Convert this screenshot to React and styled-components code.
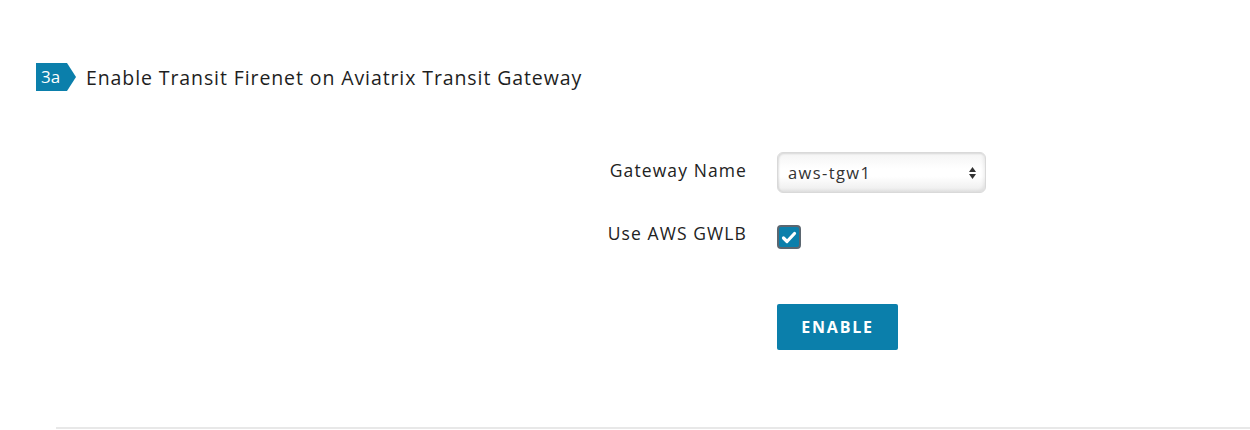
import React from 'react';
import styled, { createGlobalStyle } from 'styled-components';

const GlobalStyle = createGlobalStyle`
  body {
    margin: 0;
    background: #ffffff;
    font-family: "Open Sans", "Liberation Sans", sans-serif;
    color: #222;
  }
`;

const Page = styled.div`
  width: 1250px;
  height: 430px;
  overflow: hidden;
  padding-top: 63px;
  box-sizing: border-box;
`;

const StepHeader = styled.div`
  display: flex;
  align-items: center;
  gap: 11px;
  padding-left: 36px;
`;

const StepBadge = styled.div`
  position: relative;
  width: 31px;
  height: 28px;
  background: #0b7fab;
  color: #fff;
  font-size: 17px;
  line-height: 28px;
  padding-left: 5px;
  box-sizing: border-box;
  &::after {
    content: '';
    position: absolute;
    left: 31px;
    top: 0;
    border-top: 14px solid transparent;
    border-bottom: 14px solid transparent;
    border-left: 9px solid #0b7fab;
  }
`;

const StepTitle = styled.div`
  font-size: 19.5px;
  letter-spacing: 0.9px;
  color: #1e1e1e;
  margin-left: 8px;
`;

const Form = styled.div`
  display: grid;
  grid-template-columns: 746px 210px;
  column-gap: 31px;
  margin-top: 61px;
`;

const Label = styled.div`
  text-align: right;
  font-size: 17.5px;
  letter-spacing: 1.1px;
  margin-right: -1px;
  color: #222;
  margin-top: ${(p) => p.$top || 0}px;
  margin-bottom: ${(p) => p.$bottom || 0}px;
`;

const Field = styled.div`
  margin-bottom: ${(p) => p.$bottom || 0}px;
`;

const SelectBox = styled.div`
  position: relative;
  width: 209px;
  height: 41px;
  box-sizing: border-box;
  border: 1px solid #d9d9d9;
  border-radius: 6px;
  background: linear-gradient(#f4f4f4, #ffffff 40%, #ffffff 60%, #ececec);
  box-shadow: inset 1px 1px 2px rgba(0,0,0,0.12), inset -2px -2px 3px rgba(0,0,0,0.06);
  display: flex;
  align-items: center;
  padding-left: 10px;
  font-size: 16.5px;
  letter-spacing: 1.4px;
  color: #333;
`;

const Arrows = styled.svg`
  position: absolute;
  right: 8px;
  top: 13px;
`;

const CheckBox = styled.div`
  width: 24px;
  height: 24px;
  box-sizing: border-box;
  border: 2px solid #5b6670;
  border-radius: 4px;
  background: #0b7fab;
  display: flex;
  align-items: center;
  justify-content: center;
`;

const EnableButton = styled.button`
  width: 121px;
  height: 46px;
  background: #0b7fab;
  color: #fff;
  border: none;
  border-radius: 2px;
  font-family: "Open Sans", "Liberation Sans", sans-serif;
  font-weight: 700;
  font-size: 16px;
  letter-spacing: 1.8px;
  padding: 0;
`;

const Divider = styled.div`
  margin-left: 56px;
  margin-top: 77px;
  height: 2px;
  background: #e8e8e8;
`;

export default function App() {
  return (
    <Page>
      <GlobalStyle />
      <StepHeader>
        <StepBadge>3a</StepBadge>
        <StepTitle>Enable Transit Firenet on Aviatrix Transit Gateway</StepTitle>
      </StepHeader>
      <Form>
        <Label $top={6} $bottom={32}>Gateway Name</Label>
        <Field $bottom={32}>
          <SelectBox>
            aws-tgw1
            <Arrows width="9" height="14" viewBox="0 0 9 14">
              <path d="M4.5 1 L8 6 L1 6 Z" fill="#333" />
              <path d="M4.5 13 L8 8 L1 8 Z" fill="#333" />
            </Arrows>
          </SelectBox>
        </Field>
        <Label $top={-4} $bottom={55}>Use AWS GWLB</Label>
        <Field $bottom={55}>
          <CheckBox>
            <svg width="16" height="13" viewBox="0 0 16 13">
              <path d="M2.5 7 L6 10.5 L13.5 2.5" stroke="#fff" strokeWidth="3.2" fill="none" strokeLinecap="round" strokeLinejoin="round" />
            </svg>
          </CheckBox>
        </Field>
        <div />
        <Field>
          <EnableButton>ENABLE</EnableButton>
        </Field>
      </Form>
      <Divider />
    </Page>
  );
}
